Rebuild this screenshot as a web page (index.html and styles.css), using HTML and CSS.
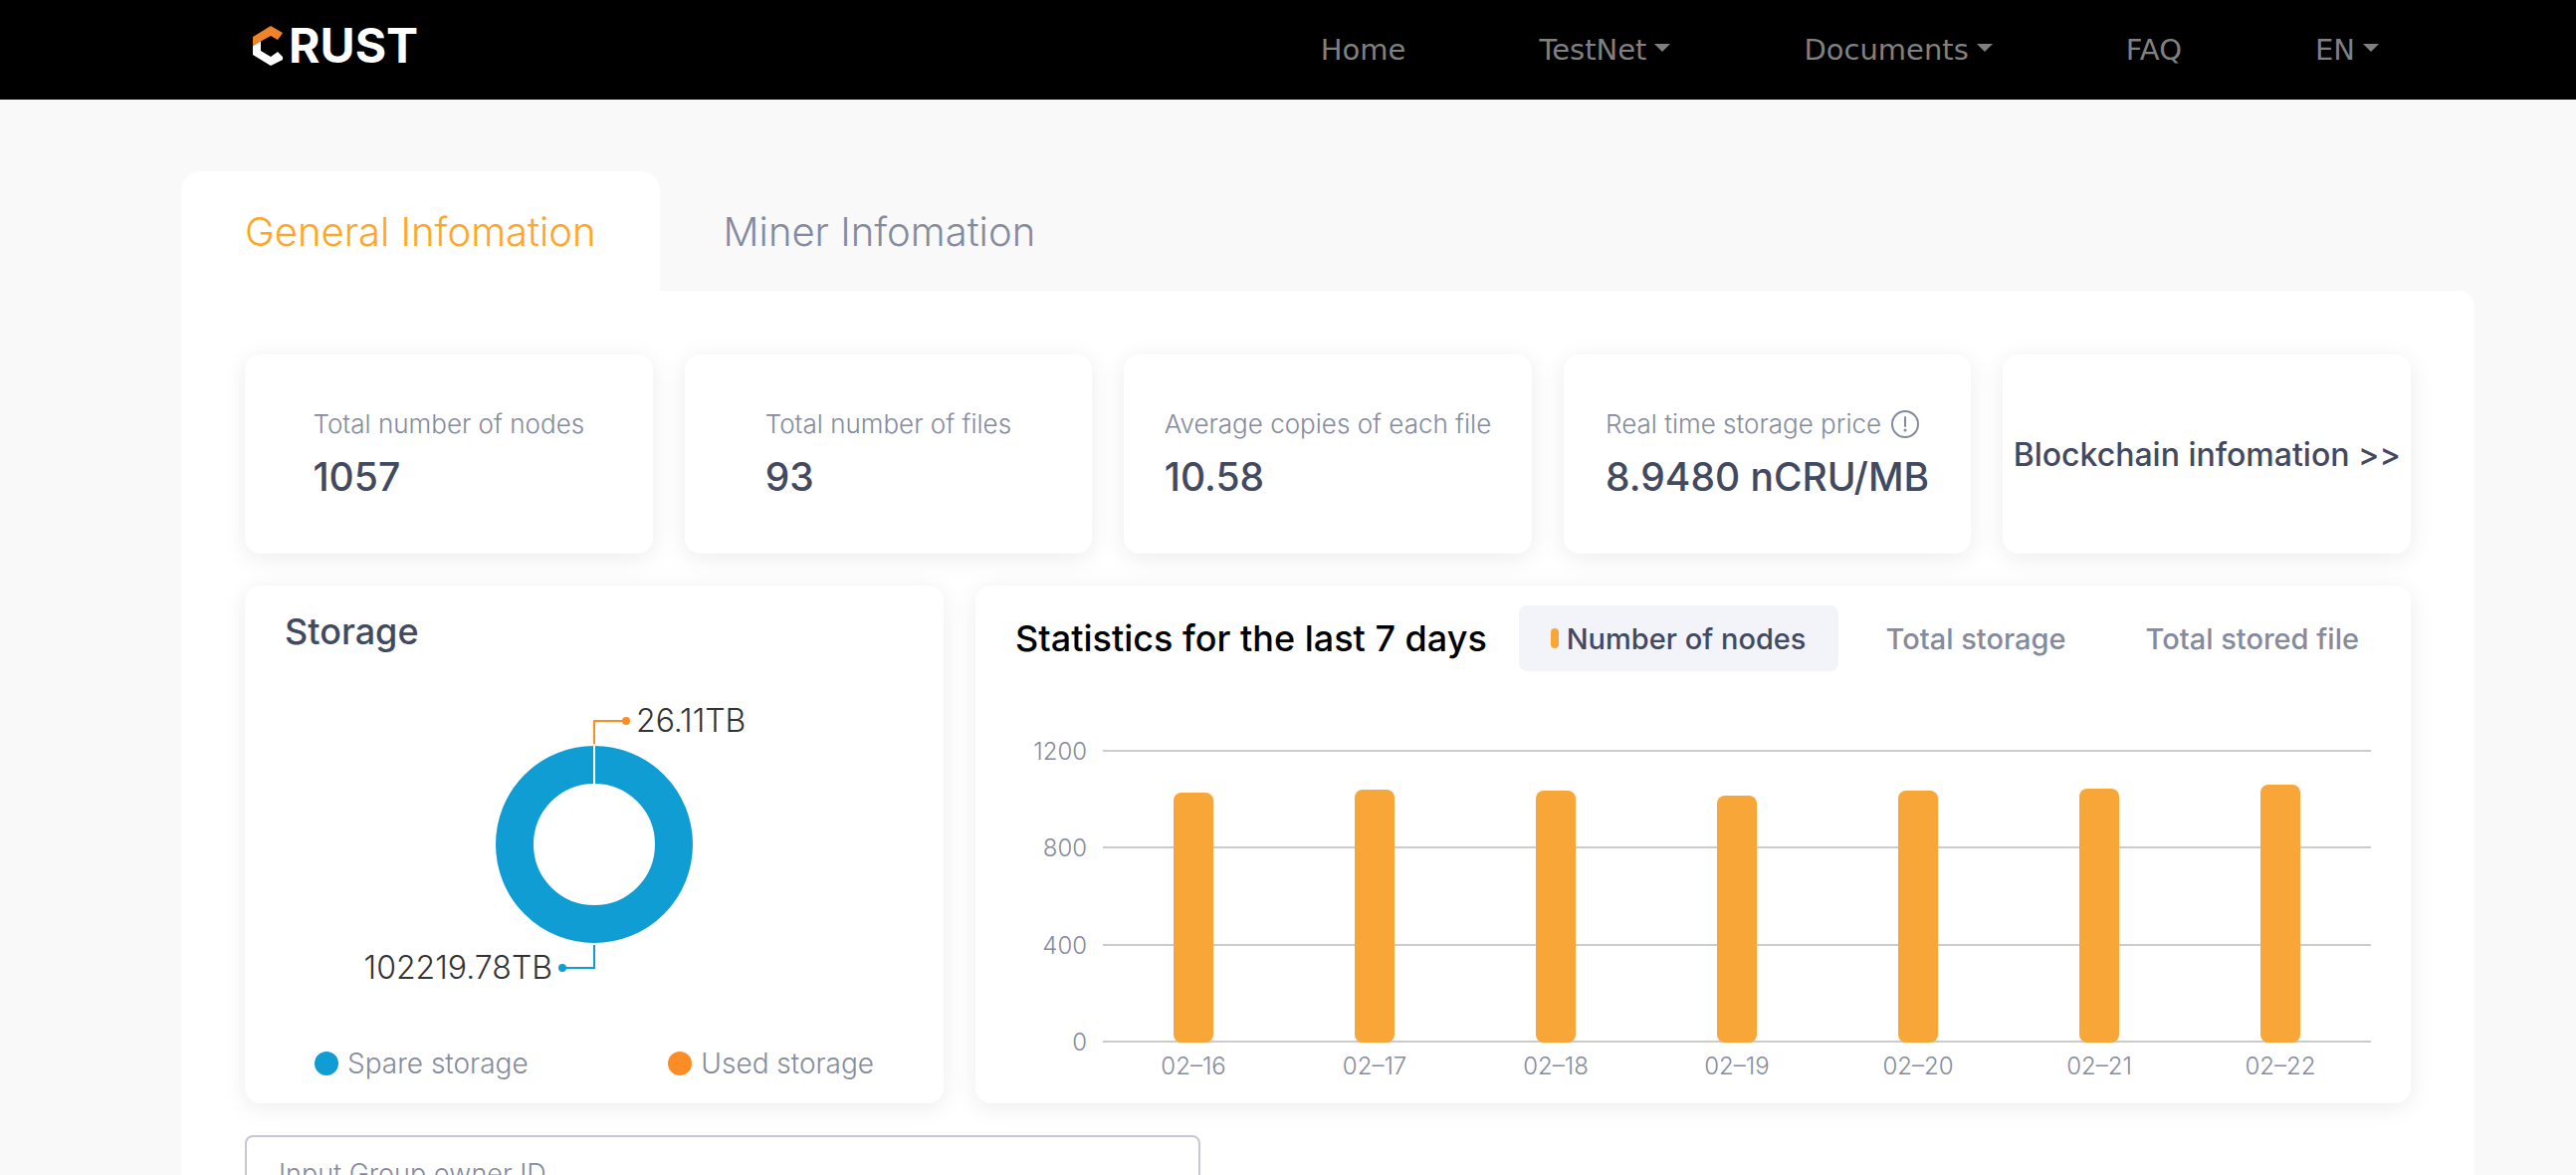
FILE: index.html
```html
<!DOCTYPE html>
<html lang="en">
<head>
    <meta charset="UTF-8">
    <meta name="viewport" content="width=device-width, initial-scale=1.0">
    <title>Crust Network - General Infomation</title>
    <link rel="stylesheet" href="styles.css">
</head>
<body>
    <header class="navbar">
        <a href="#" class="logo">
            <svg class="logo-mark" viewBox="0 0 30 40" aria-hidden="true">
                <path fill="#fff" d="M0 20 L8 15 V25 L18 31 L25 26 L30 31 V34 L18 40 L0 29 Z"/>
                <path fill="#ee8427" d="M0 11 L18 0 L30 7 L25 14 L18 10 L0 20 Z"/>
            </svg>
            <span>RUST</span>
        </a>
        <nav class="nav-links">
            <a href="#">Home</a>
            <a href="#" class="dropdown">TestNet</a>
            <a href="#" class="dropdown">Documents</a>
            <a href="#">FAQ</a>
            <a href="#" class="dropdown">EN</a>
        </nav>
    </header>

    <main class="page">
        <div class="tabs">
            <button type="button" class="tab active">General Infomation</button>
            <button type="button" class="tab">Miner Infomation</button>
        </div>

        <div class="panel">
            <!-- Summary cards -->
            <section class="summary">
                <div class="card summary-card">
                    <div>
                        <p class="label">Total number of nodes</p>
                        <p class="value">1057</p>
                    </div>
                </div>
                <div class="card summary-card">
                    <div>
                        <p class="label">Total number of files</p>
                        <p class="value">93</p>
                    </div>
                </div>
                <div class="card summary-card">
                    <div>
                        <p class="label">Average copies of each file</p>
                        <p class="value">10.58</p>
                    </div>
                </div>
                <div class="card summary-card">
                    <div>
                        <p class="label">Real time storage price
                            <svg class="info-icon" viewBox="0 0 28 28" aria-hidden="true">
                                <circle cx="14" cy="14" r="13" fill="none" stroke="currentColor" stroke-width="2"/>
                                <path d="M14 7v9" stroke="currentColor" stroke-width="2" stroke-linecap="round"/>
                                <circle cx="14" cy="20" r="1.5" fill="currentColor"/>
                            </svg>
                        </p>
                        <p class="value">8.9480 nCRU/MB</p>
                    </div>
                </div>
                <a href="#" class="card summary-card chain-link">Blockchain infomation &gt;&gt;</a>
            </section>

            <section class="charts">
                <!-- Storage donut -->
                <div class="card storage">
                    <h2>Storage</h2>
                    <svg class="donut" viewBox="-240 -160 480 320">
                        <circle r="80" fill="none" stroke="#0f9dd3" stroke-width="38"/>
                        <path d="M0 -100V-60" stroke="#fff" stroke-width="2"/>
                        <path d="M0 -101V-124H32" fill="none" stroke="#fc8d26" stroke-width="2"/>
                        <circle cx="32" cy="-124" r="4" fill="#fc8d26"/>
                        <text x="42" y="-113">26.11TB</text>
                        <path d="M0 101V124H-32" fill="none" stroke="#0f9dd3" stroke-width="2"/>
                        <circle cx="-32" cy="124" r="4" fill="#0f9dd3"/>
                        <text x="-42" y="135" text-anchor="end">102219.78TB</text>
                    </svg>
                    <ul class="legend">
                        <li><span class="dot spare"></span>Spare storage</li>
                        <li><span class="dot used"></span>Used storage</li>
                    </ul>
                </div>

                <!-- Last 7 days -->
                <div class="card statistics">
                    <div class="statistics-header">
                        <h2>Statistics for the last 7 days</h2>
                        <div class="filters">
                            <button type="button" class="filter active">Number of nodes</button>
                            <button type="button" class="filter">Total storage</button>
                            <button type="button" class="filter">Total stored file</button>
                        </div>
                    </div>
                    <div class="bar-chart">
                        <div class="y-axis">
                            <span>1200</span>
                            <span>800</span>
                            <span>400</span>
                            <span>0</span>
                        </div>
                        <div class="plot">
                            <div class="grid-lines"><i></i><i></i><i></i><i></i></div>
                            <div class="bars">
                                <div class="bar" style="height: 85.5%"></div>
                                <div class="bar" style="height: 86.3%"></div>
                                <div class="bar" style="height: 86%"></div>
                                <div class="bar" style="height: 84.5%"></div>
                                <div class="bar" style="height: 86.2%"></div>
                                <div class="bar" style="height: 86.6%"></div>
                                <div class="bar" style="height: 88.1%"></div>
                            </div>
                        </div>
                        <div class="x-axis">
                            <span>02–16</span>
                            <span>02–17</span>
                            <span>02–18</span>
                            <span>02–19</span>
                            <span>02–20</span>
                            <span>02–21</span>
                            <span>02–22</span>
                        </div>
                    </div>
                </div>
            </section>

            <input type="text" class="search" placeholder="Input Group owner ID" aria-label="Group owner ID">
        </div>
    </main>
</body>
</html>
```

FILE: styles.css
```css
* {
    margin: 0;
    padding: 0;
    box-sizing: border-box;
}

body {
    background-color: #f9f9f9;
    color: #434a5f;
    font-family: Inter, "Liberation Sans", sans-serif;
}

a {
    text-decoration: none;
}

button {
    border: none;
    background: none;
    font-family: inherit;
    cursor: pointer;
}

/* Navbar */
.navbar {
    display: flex;
    justify-content: space-between;
    align-items: center;
    height: 100px;
    padding: 0 198px 0 254px;
    background-color: #000;
}

.logo {
    display: flex;
    align-items: center;
    gap: 6px;
    margin-bottom: 8px;
    color: #fff;
    font-size: 48px;
    line-height: 44px;
    font-weight: 700;
}

.logo-mark {
    width: 30px;
    height: 40px;
}

.nav-links {
    display: flex;
    gap: 134px;
}

.nav-links a {
    display: flex;
    align-items: center;
    gap: 8px;
    color: #808080;
    font-family: "DejaVu Sans", sans-serif;
    font-size: 29px;
    line-height: 34px;
}

.dropdown::after {
    content: "";
    margin-bottom: 4px;
    border-top: 8px solid #808080;
    border-left: 8px solid transparent;
    border-right: 8px solid transparent;
}

/* Tabs */
.page {
    padding: 72px 102px 0 182px;
}

.tabs {
    display: flex;
}

.tab {
    height: 120px;
    padding: 0 64px;
    border-radius: 20px 20px 0 0;
    color: #858b9c;
    font-size: 40px;
    font-weight: 300;
}

.tab.active {
    background-color: #fff;
    color: #ffa627;
}

.panel {
    padding: 64px;
    background-color: #fff;
    border-radius: 0 16px 0 0;
}

.card {
    background-color: #fff;
    border-radius: 16px;
    box-shadow: 0 4px 24px rgba(0, 0, 0, 0.08);
}

/* Summary cards */
.summary {
    display: grid;
    grid-template-columns: repeat(5, 1fr);
    gap: 32px;
}

.summary-card {
    display: flex;
    justify-content: center;
    align-items: center;
    height: 200px;
    white-space: nowrap;
}

.label {
    display: flex;
    align-items: center;
    gap: 10px;
    color: #858b9c;
    font-size: 26px;
    font-weight: 300;
    line-height: 50px;
}

.value {
    margin-bottom: 4px;
    font-size: 39px;
    font-weight: 500;
    line-height: 56px;
}

.info-icon {
    width: 28px;
    height: 28px;
}

.chain-link {
    color: #434a5f;
    font-size: 32px;
    font-weight: 500;
}

/* Charts */
.charts {
    display: grid;
    grid-template-columns: calc(33% - 16px) 1fr;
    gap: 32px;
    margin-top: 32px;
}

h2 {
    font-size: 36px;
    font-weight: 500;
    white-space: nowrap;
}

.storage {
    display: flex;
    flex-direction: column;
    padding: 20px 40px;
}

.storage h2 {
    line-height: 52px;
}

.donut {
    width: 480px;
    height: 320px;
    margin: 28px auto 40px;
}

.donut text {
    fill: #333;
    font-size: 32px;
    font-weight: 300;
}

.legend {
    display: flex;
    justify-content: space-between;
    padding: 0 30px;
    list-style: none;
}

.legend li {
    display: flex;
    align-items: center;
    gap: 9px;
    color: #858b9c;
    font-size: 28px;
    font-weight: 300;
    line-height: 40px;
}

.dot {
    width: 24px;
    height: 24px;
    border-radius: 50%;
}

.dot.spare {
    background-color: #0f9dd3;
}

.dot.used {
    background-color: #fc8d26;
}

.statistics {
    padding: 20px 20px 24px 40px;
}

.statistics-header {
    display: flex;
    justify-content: space-between;
    align-items: center;
    color: #000;
}

.filters {
    display: flex;
    gap: 16px;
}

.filter {
    display: flex;
    align-items: center;
    gap: 8px;
    height: 66px;
    padding: 0 32px;
    border-radius: 8px;
    color: #858b9c;
    font-size: 29px;
    font-weight: 500;
    white-space: nowrap;
}

.filter.active {
    background-color: #f3f4f9;
    color: #434a5f;
}

.filter.active::before {
    content: "";
    width: 8px;
    height: 20px;
    border-radius: 4px;
    background-color: #f8a637;
}

.bar-chart {
    display: grid;
    grid-template-columns: 72px 1fr;
    gap: 12px 16px;
    margin: 79px 20px 0 0;
    color: #858b9c;
    font-size: 24px;
    font-weight: 300;
    line-height: 24px;
}

.y-axis {
    display: flex;
    flex-direction: column;
    justify-content: space-between;
    margin: -10px 0 -12px;
    text-align: right;
}

.plot {
    display: grid;
    height: 294px;
}

/* lines and bars share one cell */
.grid-lines,
.bars {
    grid-area: 1 / 1;
}

.grid-lines {
    display: flex;
    flex-direction: column;
    justify-content: space-between;
}

.grid-lines i {
    height: 2px;
    background-color: #ccc;
}

.bars {
    display: flex;
    justify-content: space-around;
    align-items: flex-end;
}

.bar {
    width: 40px;
    border-radius: 8px;
    background-color: #f8a637;
}

.x-axis {
    grid-column: 2;
    display: flex;
}

.x-axis span {
    flex: 1;
    text-align: center;
}

.search {
    display: block;
    width: 960px;
    max-width: 100%;
    height: 76px;
    margin-top: 32px;
    padding: 0 32px;
    border: 2px solid #c5c8d4;
    border-radius: 8px;
    font-family: inherit;
    font-size: 27px;
    font-weight: 300;
}

.search::placeholder {
    color: #858b9c;
}
```
